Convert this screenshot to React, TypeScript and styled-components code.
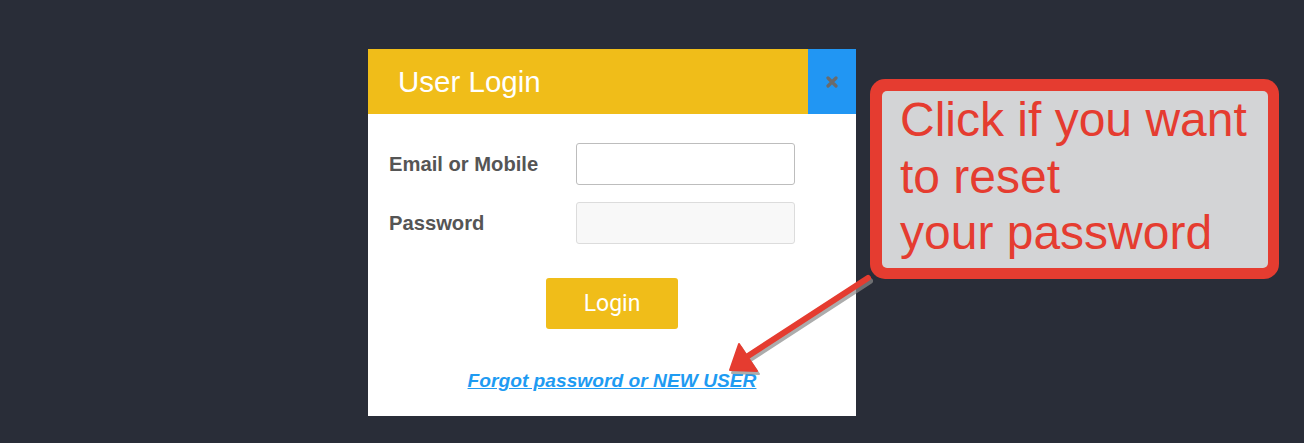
import styled, { createGlobalStyle } from "styled-components";

const GlobalStyle = createGlobalStyle`
  html, body {
    margin: 0;
    padding: 0;
    background: #292d38;
  }
  body {
    font-family: "Liberation Sans", Arial, sans-serif;
  }
`;

export default function App() {
  return (
    <>
      <GlobalStyle />
      <Page>
        <Modal>
          <Header>
            <Title>User Login</Title>
            <CloseButton aria-label="close">
              <svg width="12" height="12" viewBox="0 0 12 12">
                <path
                  d="M2 2 L10 10 M10 2 L2 10"
                  stroke="#6b6b6b"
                  strokeWidth="3.2"
                  strokeLinecap="round"
                />
              </svg>
            </CloseButton>
          </Header>
          <Body>
            <FormRow>
              <Label>Email or Mobile</Label>
              <Input type="text" />
            </FormRow>
            <FormRow>
              <Label>Password</Label>
              <Input type="password" disabled variant="muted" />
            </FormRow>
            <LoginButton>Login</LoginButton>
            <ForgotLink href="#">Forgot password or NEW USER</ForgotLink>
          </Body>
        </Modal>

        <Callout>
          <CalloutInner>
            Click if you want
            <br />
            to reset
            <br />
            your password
          </CalloutInner>
        </Callout>

        <Arrow width="1304" height="443" viewBox="0 0 1304 443">
          <g transform="translate(2 3)" fill="#8a8a8a" stroke="#8a8a8a" opacity="0.7">
            <line x1="868" y1="278" x2="748" y2="356" strokeWidth="6" strokeLinecap="round" />
            <polygon points="730,370 739,344 757,371" strokeWidth="2" strokeLinejoin="round" />
          </g>
          <g fill="#e53c30" stroke="#e53c30">
            <line x1="868" y1="278" x2="748" y2="356" strokeWidth="6" strokeLinecap="round" />
            <polygon points="730,370 739,344 757,371" strokeWidth="2" strokeLinejoin="round" />
          </g>
        </Arrow>
      </Page>
    </>
  );
}

const Page = styled.div`
  position: relative;
  width: 1304px;
  height: 443px;
  box-sizing: border-box;
  padding: 49px 0 0 368px;
  display: flex;
  align-items: flex-start;
  overflow: hidden;
`;

const Modal = styled.div`
  width: 488px;
  height: 367px;
  background: #ffffff;
  display: flex;
  flex-direction: column;
`;

const Header = styled.div`
  height: 65px;
  background: #f0bd19;
  display: flex;
  align-items: stretch;
`;

const Title = styled.h2`
  flex: 1;
  margin: 0;
  padding-left: 30px;
  display: flex;
  align-items: center;
  font-size: 29.5px;
  font-weight: 400;
  color: #ffffff;
`;

const CloseButton = styled.button`
  width: 48px;
  border: none;
  padding: 0;
  background: #2196f3;
  display: flex;
  align-items: center;
  justify-content: center;
  cursor: pointer;
`;

const Body = styled.div`
  flex: 1;
  padding: 29px 61px 0 21px;
  display: flex;
  flex-direction: column;
`;

const FormRow = styled.div`
  display: flex;
  align-items: center;
  height: 42px;
  margin-bottom: 17px;
`;

const Label = styled.label`
  width: 187px;
  font-size: 20.2px;
  font-weight: 700;
  color: #555555;
`;

const Input = styled.input<{ variant?: "muted" }>`
  width: 219px;
  height: 42px;
  box-sizing: border-box;
  border-radius: 3px;
  border: 1px solid ${(p) => (p.variant === "muted" ? "#dcdcdc" : "#bdbdbd")};
  background: ${(p) => (p.variant === "muted" ? "#f8f8f8" : "#ffffff")};
  outline: none;
  padding: 0 10px;
  font-size: 16px;
`;

const LoginButton = styled.button`
  align-self: center;
  margin: 17px 0 0 40px;
  width: 132px;
  height: 51px;
  border: none;
  border-radius: 3px;
  background: #f0bd19;
  color: #ffffff;
  font-family: Roboto, "Liberation Sans", sans-serif;
  font-size: 23px;
  cursor: pointer;
`;

const ForgotLink = styled.a`
  align-self: center;
  margin: 41px 0 0 40px;
  font-size: 19.2px;
  line-height: 22px;
  font-weight: 700;
  font-style: italic;
  color: #1e9bf2;
  text-decoration: underline;
`;

const Callout = styled.div`
  margin: 30px 0 0 14px;
  width: 409px;
  height: 200px;
  box-sizing: border-box;
  padding: 12px 11px 11px 12px;
  background: #e53c30;
  border-radius: 15px;
`;

const CalloutInner = styled.div`
  height: 100%;
  box-sizing: border-box;
  background: #d3d4d6;
  border-radius: 5px;
  padding: 1px 0 0 18px;
  font-size: 48px;
  line-height: 56.5px;
  color: #e53c30;
`;

const Arrow = styled.svg`
  position: absolute;
  left: 0;
  top: 0;
  pointer-events: none;
`;
